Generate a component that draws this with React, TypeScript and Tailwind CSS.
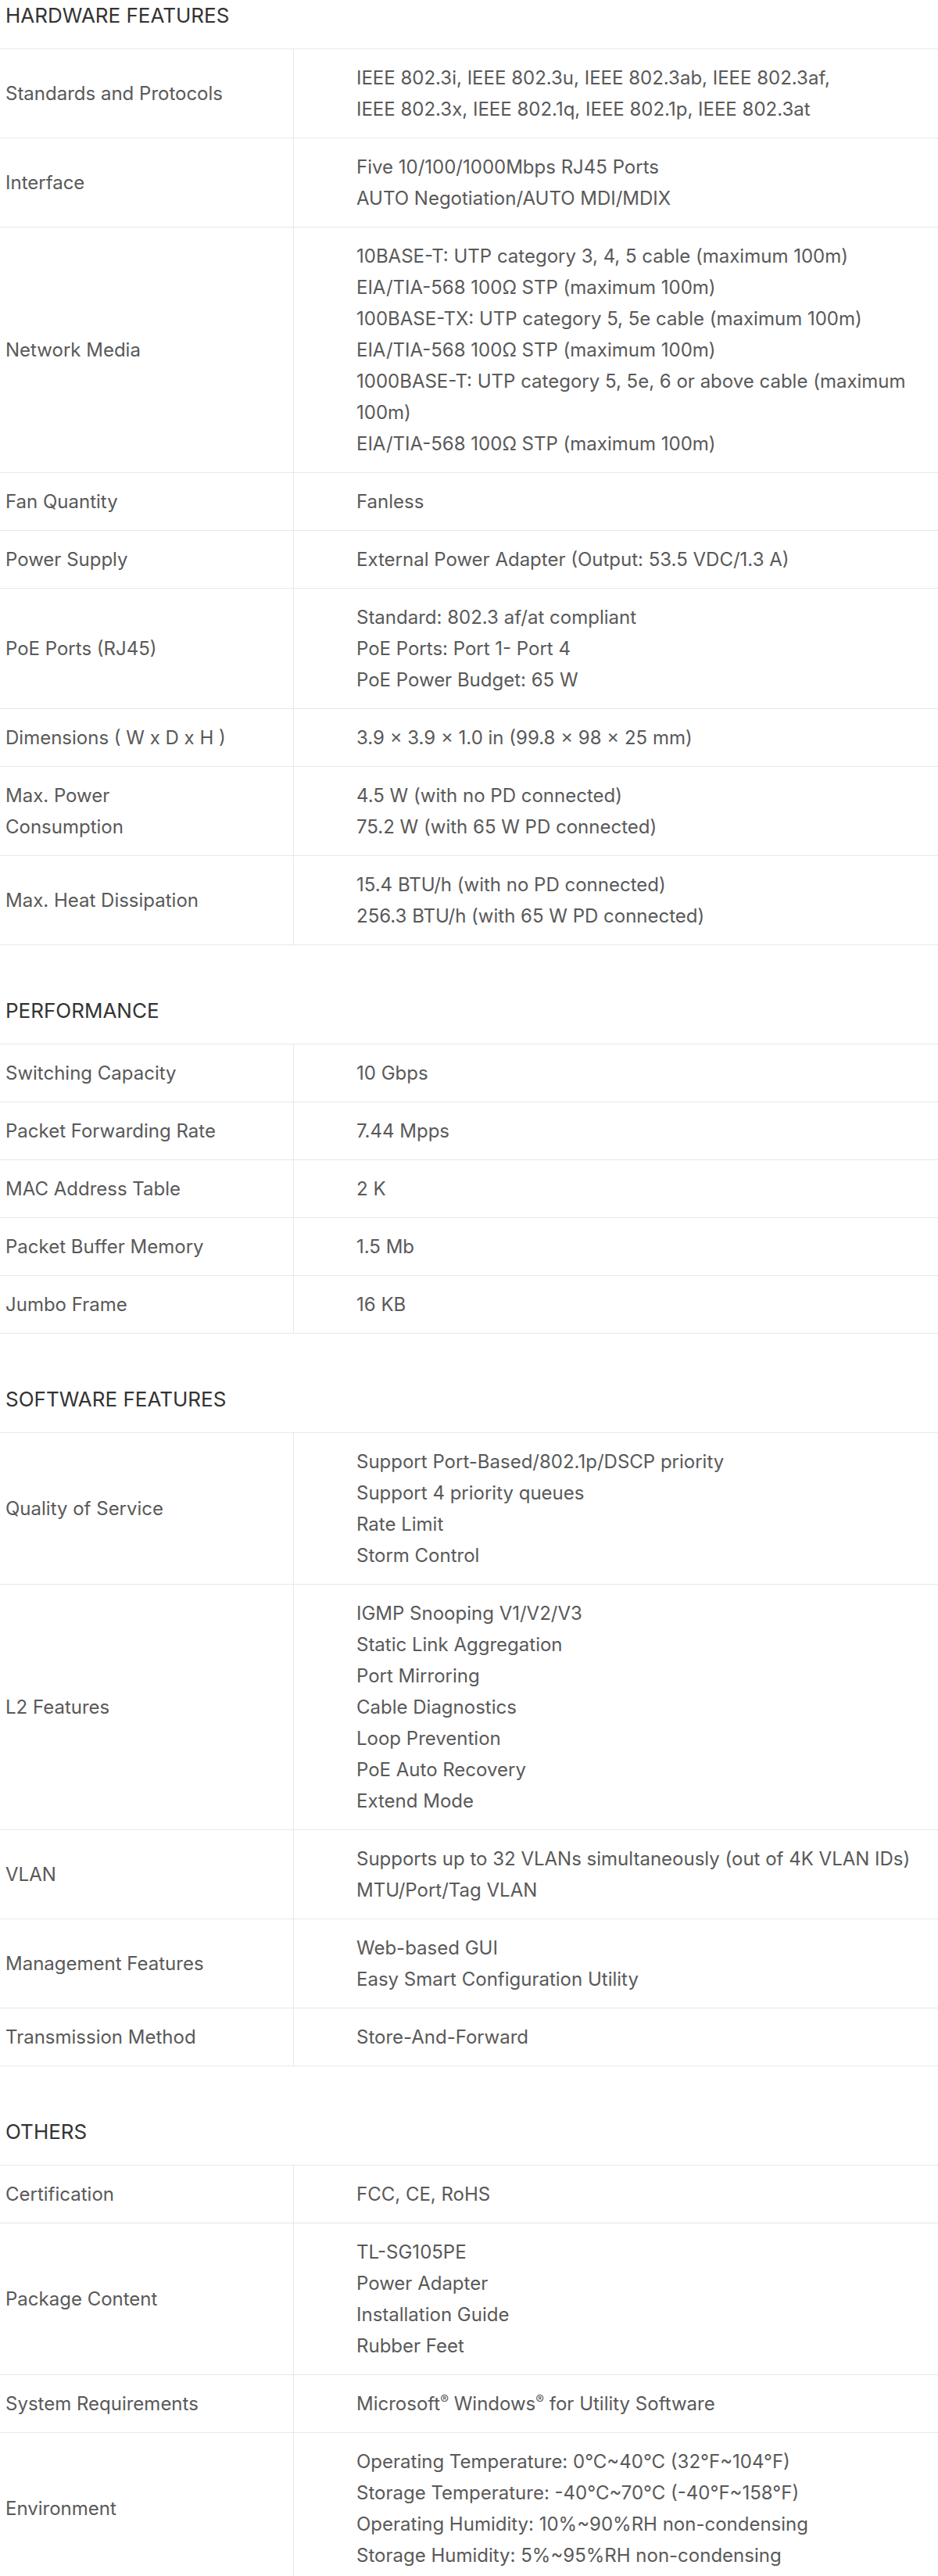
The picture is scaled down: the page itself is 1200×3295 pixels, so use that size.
type Row = { label: string[]; value: string[] };
type Section = { title: string; rows: Row[] };

const sections: Section[] = [
  {
    title: "HARDWARE FEATURES",
    rows: [
      {
        label: ["Standards and Protocols"],
        value: [
          "IEEE 802.3i, IEEE 802.3u, IEEE 802.3ab, IEEE 802.3af,",
          "IEEE 802.3x, IEEE 802.1q, IEEE 802.1p, IEEE 802.3at",
        ],
      },
      {
        label: ["Interface"],
        value: ["Five 10/100/1000Mbps RJ45 Ports", "AUTO Negotiation/AUTO MDI/MDIX"],
      },
      {
        label: ["Network Media"],
        value: [
          "10BASE-T: UTP category 3, 4, 5 cable (maximum 100m)",
          "EIA/TIA-568 100Ω STP (maximum 100m)",
          "100BASE-TX: UTP category 5, 5e cable (maximum 100m)",
          "EIA/TIA-568 100Ω STP (maximum 100m)",
          "1000BASE-T: UTP category 5, 5e, 6 or above cable (maximum",
          "100m)",
          "EIA/TIA-568 100Ω STP (maximum 100m)",
        ],
      },
      { label: ["Fan Quantity"], value: ["Fanless"] },
      { label: ["Power Supply"], value: ["External Power Adapter (Output: 53.5 VDC/1.3 A)"] },
      {
        label: ["PoE Ports (RJ45)"],
        value: [
          "Standard: 802.3 af/at compliant",
          "PoE Ports: Port 1- Port 4",
          "PoE Power Budget: 65 W",
        ],
      },
      { label: ["Dimensions ( W x D x H )"], value: ["3.9 × 3.9 × 1.0 in (99.8 × 98 × 25 mm)"] },
      {
        label: ["Max. Power", "Consumption"],
        value: ["4.5 W (with no PD connected)", "75.2 W (with 65 W PD connected)"],
      },
      {
        label: ["Max. Heat Dissipation"],
        value: ["15.4 BTU/h (with no PD connected)", "256.3 BTU/h (with 65 W PD connected)"],
      },
    ],
  },
  {
    title: "PERFORMANCE",
    rows: [
      { label: ["Switching Capacity"], value: ["10 Gbps"] },
      { label: ["Packet Forwarding Rate"], value: ["7.44 Mpps"] },
      { label: ["MAC Address Table"], value: ["2 K"] },
      { label: ["Packet Buffer Memory"], value: ["1.5 Mb"] },
      { label: ["Jumbo Frame"], value: ["16 KB"] },
    ],
  },
  {
    title: "SOFTWARE FEATURES",
    rows: [
      {
        label: ["Quality of Service"],
        value: [
          "Support Port-Based/802.1p/DSCP priority",
          "Support 4 priority queues",
          "Rate Limit",
          "Storm Control",
        ],
      },
      {
        label: ["L2 Features"],
        value: [
          "IGMP Snooping V1/V2/V3",
          "Static Link Aggregation",
          "Port Mirroring",
          "Cable Diagnostics",
          "Loop Prevention",
          "PoE Auto Recovery",
          "Extend Mode",
        ],
      },
      {
        label: ["VLAN"],
        value: [
          "Supports up to 32 VLANs simultaneously (out of 4K VLAN IDs)",
          "MTU/Port/Tag VLAN",
        ],
      },
      {
        label: ["Management Features"],
        value: ["Web-based GUI", "Easy Smart Configuration Utility"],
      },
      { label: ["Transmission Method"], value: ["Store-And-Forward"] },
    ],
  },
  {
    title: "OTHERS",
    rows: [
      { label: ["Certification"], value: ["FCC, CE, RoHS"] },
      {
        label: ["Package Content"],
        value: ["TL-SG105PE", "Power Adapter", "Installation Guide", "Rubber Feet"],
      },
      { label: ["System Requirements"], value: ["SYSREQ"] },
      {
        label: ["Environment"],
        value: [
          "Operating Temperature: 0°C~40°C (32°F~104°F)",
          "Storage Temperature: -40°C~70°C (-40°F~158°F)",
          "Operating Humidity: 10%~90%RH non-condensing",
          "Storage Humidity: 5%~95%RH non-condensing",
        ],
      },
    ],
  },
];

function ValueLine({ text }: { text: string }) {
  if (text === "SYSREQ") {
    return (
      <div className="whitespace-nowrap">
        Microsoft<sup className="text-[16px] leading-none">®</sup> Windows
        <sup className="text-[16px] leading-none">®</sup> for Utility Software
      </div>
    );
  }
  return <div className="whitespace-nowrap">{text}</div>;
}

function SpecTable({ section, first }: { section: Section; first: boolean }) {
  return (
    <section className={first ? "" : "mt-16"}>
      <h2 className="pl-[7px] pb-[22px] text-[26px] leading-[40px] font-normal text-[#333]">
        {section.title}
      </h2>
      <div className="border-t border-[#e6e8ee]">
        {section.rows.map((row, i) => (
          <div key={i} className="flex border-b border-[#e6e8ee]">
            <div className="w-[376px] shrink-0 border-r border-[#e6e8ee] pl-[7px] pr-4 py-[16.5px] flex items-center">
              <div>
                {row.label.map((l, j) => (
                  <div key={j}>{l}</div>
                ))}
              </div>
            </div>
            <div className="flex-1 pl-[80px] pr-4 py-[16.5px]">
              {row.value.map((v, j) => (
                <ValueLine key={j} text={v} />
              ))}
            </div>
          </div>
        ))}
      </div>
    </section>
  );
}

export default function App() {
  return (
    <div
      className="w-[1200px] bg-white text-[24px] leading-[40px] text-[#595959]"
      style={{ fontFamily: "Inter, 'Open Sans', sans-serif" }}
    >
      {sections.map((s, i) => (
        <SpecTable key={s.title} section={s} first={i === 0} />
      ))}
    </div>
  );
}
